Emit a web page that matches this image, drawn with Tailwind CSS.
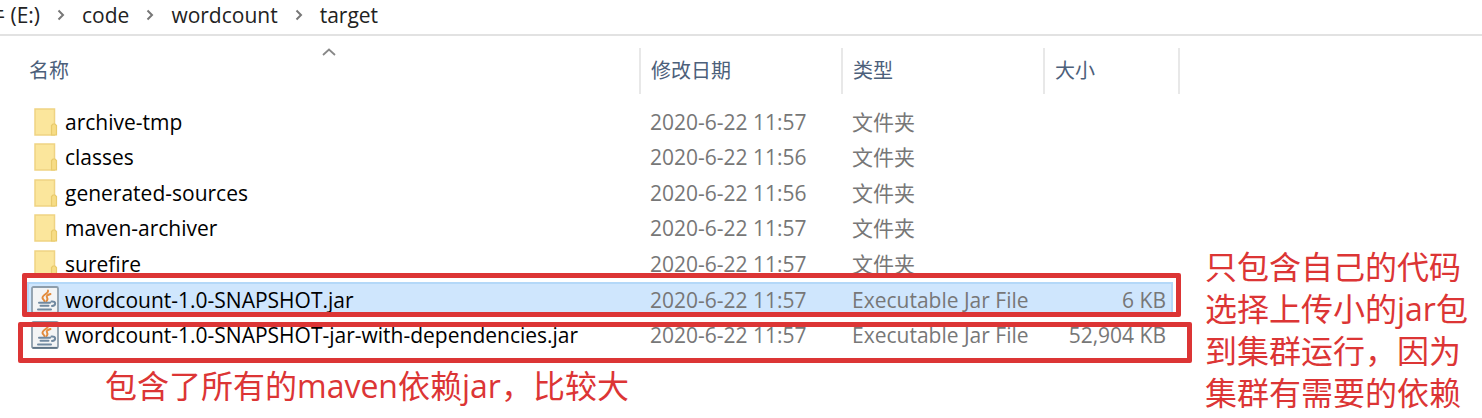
<!DOCTYPE html>
<html lang="zh-CN">
<head>
    <meta charset="UTF-8">
    <meta name="viewport" content="width=device-width, initial-scale=1.0">
    <title>target</title>
    <script src="https://cdn.jsdelivr.net/npm/@tailwindcss/browser@4"></script>
</head>
<body class="bg-white text-black text-[21px] leading-7 font-['Open_Sans','Noto_Sans_CJK_SC',sans-serif] overflow-hidden">

    <!-- Icons shared by the rows -->
    <svg class="hidden">
        <symbol id="folder" viewBox="0 0 24 28">
            <path d="M1 1h19.500v26H1z" fill="#fbe69c" stroke="#efd383" stroke-width="1.500"/>
            <path d="M17.500 27V17.500l1.500-1.500h2l1.500 1.500V27z" fill="#f7dc85" stroke="#e8ca6c" stroke-width="1.200"/>
        </symbol>
        <symbol id="jar" viewBox="0 0 28 28">
            <rect x="1" y="1" width="26" height="26" rx="1.500" fill="#f3f4f5" stroke="#8d9dab" stroke-width="1.800"/>
            <path d="M1.500 26.800h25" stroke="#5f7485" stroke-width="1.800"/>
            <path d="M17 4.500c1 3-6 4.500-5.500 7.500 .2 1.500 2 2 2 3.500M19.500 8c-3 1-4.500 2-3.500 3.500 1 1.500.5 2.500-.5 3.500" fill="none" stroke="#e38b3c" stroke-width="1.900" stroke-linecap="round"/>
            <path d="M8 16.800h11M9.500 19.800h8M7 23.500h13M20.500 15.500c5-.5 4.500 4 .5 4.500" fill="none" stroke="#7189a0" stroke-width="2" stroke-linecap="round"/>
        </symbol>
        <symbol id="chevron" viewBox="0 0 8 12">
            <path d="M1.500 1.500L6 6l-4.500 4.500" fill="none" stroke="#777" stroke-width="2"/>
        </symbol>
    </svg>

    <!-- Address bar -->
    <nav class="flex items-center h-9 pb-1 border-b-2 border-[#e2e2e2] text-[#222] whitespace-nowrap">
        <a href="#" class="-ml-4">件 (E:)</a>
        <svg class="w-2 h-3 mx-[17px] shrink-0"><use href="#chevron"/></svg>
        <a href="#">code</a>
        <svg class="w-2 h-3 mx-[17px] shrink-0"><use href="#chevron"/></svg>
        <a href="#">wordcount</a>
        <svg class="w-2 h-3 mx-[17px] shrink-0"><use href="#chevron"/></svg>
        <a href="#">target</a>
    </nav>

    <div class="flex">
        <main class="relative flex-1 pt-3">
            <svg class="absolute left-[321px] top-3 w-4 h-2" viewBox="0 0 16 8"><path d="M2 7l6-5.500L14 7" fill="none" stroke="#888" stroke-width="1.800"/></svg>

            <!-- Column headings -->
            <table class="w-full table-fixed border-collapse text-left text-[20px] whitespace-nowrap">
                <colgroup>
                    <col>
                    <col class="w-[202px]">
                    <col class="w-[202px]">
                    <col class="w-[135px]">
                </colgroup>
                <thead class="text-[#4c607a]">
                    <tr class="h-[46px]">
                        <th class="font-normal p-0 pl-[29px] border-r-2 border-[#e8e8e8]">名称</th>
                        <th class="font-normal p-0 pl-[10px] border-r-2 border-[#e8e8e8]">修改日期</th>
                        <th class="font-normal p-0 pl-[10px] border-r-2 border-[#e8e8e8]">类型</th>
                        <th class="font-normal p-0 pl-[10px] border-r-2 border-[#e8e8e8]">大小</th>
                    </tr>
                </thead>
            </table>

            <!-- File list -->
            <div class="pl-[27px] pr-[7px] pt-[10px]">
                <table class="w-full h-[249px] table-fixed border-collapse text-left whitespace-nowrap text-[#777]">
                    <colgroup>
                        <col>
                        <col class="w-[202px]">
                        <col class="w-[202px]">
                        <col class="w-[129px]">
                    </colgroup>
                    <tbody>
                        <tr>
                            <td class="p-0 pl-[7px]"><div class="flex items-center gap-[7px] text-black"><svg class="w-6 h-7"><use href="#folder"/></svg>archive-tmp</div></td>
                            <td class="p-0 pl-[10px]">2020-6-22 11:57</td>
                            <td class="p-0 pl-[10px]">文件夹</td>
                            <td></td>
                        </tr>
                        <tr>
                            <td class="p-0 pl-[7px]"><div class="flex items-center gap-[7px] text-black"><svg class="w-6 h-7"><use href="#folder"/></svg>classes</div></td>
                            <td class="p-0 pl-[10px]">2020-6-22 11:56</td>
                            <td class="p-0 pl-[10px]">文件夹</td>
                            <td></td>
                        </tr>
                        <tr>
                            <td class="p-0 pl-[7px]"><div class="flex items-center gap-[7px] text-black"><svg class="w-6 h-7"><use href="#folder"/></svg>generated-sources</div></td>
                            <td class="p-0 pl-[10px]">2020-6-22 11:56</td>
                            <td class="p-0 pl-[10px]">文件夹</td>
                            <td></td>
                        </tr>
                        <tr>
                            <td class="p-0 pl-[7px]"><div class="flex items-center gap-[7px] text-black"><svg class="w-6 h-7"><use href="#folder"/></svg>maven-archiver</div></td>
                            <td class="p-0 pl-[10px]">2020-6-22 11:57</td>
                            <td class="p-0 pl-[10px]">文件夹</td>
                            <td></td>
                        </tr>
                        <tr>
                            <td class="p-0 pl-[7px]"><div class="flex items-center gap-[7px] text-black"><svg class="w-6 h-7"><use href="#folder"/></svg>surefire</div></td>
                            <td class="p-0 pl-[10px]">2020-6-22 11:57</td>
                            <td class="p-0 pl-[10px]">文件夹</td>
                            <td></td>
                        </tr>
                        <tr class="bg-[#cfe6fd] inset-shadow-[0_0_0_2px_#b4d8f8]">
                            <td class="p-0 pl-1"><div class="flex items-center gap-[6px] text-black"><svg class="w-7 h-7"><use href="#jar"/></svg>wordcount-1.0-SNAPSHOT.jar</div></td>
                            <td class="p-0 pl-[10px]">2020-6-22 11:57</td>
                            <td class="p-0 pl-[10px]">Executable Jar File</td>
                            <td class="p-0 pr-[7px] text-right">6 KB</td>
                        </tr>
                        <tr>
                            <td class="p-0 pl-1"><div class="flex items-center gap-[6px] text-black"><svg class="w-7 h-7"><use href="#jar"/></svg>wordcount-1.0-SNAPSHOT-jar-with-dependencies.jar</div></td>
                            <td class="p-0 pl-[10px]">2020-6-22 11:57</td>
                            <td class="p-0 pl-[10px]">Executable Jar File</td>
                            <td class="p-0 pr-[7px] text-right">52,904 KB</td>
                        </tr>
                    </tbody>
                </table>
            </div>

            <!-- Red frames over the two jars -->
            <div class="absolute left-[22px] -right-[1px] top-[237px] h-11 border-5 border-[#dc3535] rounded-xs"></div>
            <div class="absolute left-[18px] -right-[12px] top-[286px] h-[41px] border-5 border-[#dc3535] rounded-xs"></div>

            <p class="pl-[105px] pt-3 text-[32px] leading-[42px] text-[#dc3535]">包含了所有的maven依赖jar，比较大</p>
        </main>

        <aside class="w-[302px] shrink-0 pl-[25px] pt-[210px] text-[32px] leading-[42px] text-[#dc3535] whitespace-nowrap">
            <p>只包含自己的代码</p>
            <p>选择上传小的jar包</p>
            <p>到集群运行，因为</p>
            <p>集群有需要的依赖</p>
        </aside>
    </div>

</body>
</html>
